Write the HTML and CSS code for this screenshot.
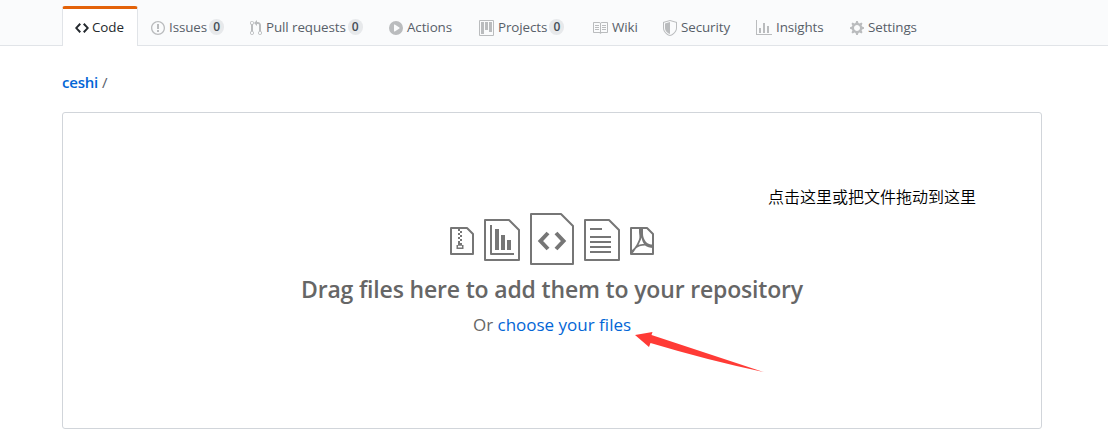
FILE: index.html
```html
<!DOCTYPE html>
<html lang="en">
<head>
<meta charset="utf-8">
<title>Upload files</title>
<link rel="stylesheet" href="styles.css">
</head>
<body>
<nav class="tabs">
  <a class="tab selected"><svg class="icon" width="14" height="16" viewBox="0 0 14 16"><path d="M9.5 3L8 4.5 11.5 8 8 11.5 9.5 13 14 8 9.5 3zm-5 0L0 8l4.5 5L6 11.5 2.5 8 6 4.5 4.5 3z"/></svg><span class="label">Code</span></a>
  <a class="tab"><svg class="icon" width="14" height="16" viewBox="0 0 14 16"><path d="M7 2.3c3.14 0 5.7 2.56 5.7 5.7s-2.56 5.7-5.7 5.7A5.71 5.71 0 011.3 8c0-3.14 2.56-5.7 5.7-5.7zM7 1C3.14 1 0 4.14 0 8s3.14 7 7 7 7-3.14 7-7-3.14-7-7-7zm1 3H6v5h2V4zm0 6H6v2h2v-2z"/></svg><span class="label">Issues</span><span class="counter">0</span></a>
  <a class="tab"><svg class="icon" width="12" height="16" viewBox="0 0 12 16"><path d="M11 11.28V5c-.03-.78-.34-1.47-.94-2.06C9.46 2.35 8.78 2.03 8 2H7V0L4 3l3 3V4h1c.27.02.48.11.69.31.21.2.3.42.31.69v6.28A1.993 1.993 0 0010 15a1.993 1.993 0 001-3.72zm-1 2.92c-.66 0-1.2-.55-1.2-1.2 0-.65.55-1.2 1.2-1.2.65 0 1.2.55 1.2 1.2 0 .65-.55 1.2-1.2 1.2zM4 3c0-1.11-.89-2-2-2a1.993 1.993 0 00-1 3.72v6.56A1.993 1.993 0 002 15a1.993 1.993 0 001-3.72V4.72c.59-.34 1-.98 1-1.72zm-.8 10c0 .66-.55 1.2-1.2 1.2-.65 0-1.2-.55-1.2-1.2 0-.65.55-1.2 1.2-1.2.65 0 1.2.55 1.2 1.2zM2 4.2C1.34 4.2.8 3.65.8 3c0-.65.55-1.2 1.2-1.2.65 0 1.2.55 1.2 1.2 0 .65-.55 1.2-1.2 1.2z"/></svg><span class="label">Pull requests</span><span class="counter">0</span></a>
  <a class="tab"><svg class="icon" width="14" height="16" viewBox="0 0 14 16"><path fill-rule="evenodd" d="M14 8A7 7 0 110 8a7 7 0 0114 0zm-8.223 3.482l4.599-3.066a.5.5 0 000-.832L5.777 4.518A.5.5 0 005 4.934v6.132a.5.5 0 00.777.416z"/></svg><span class="label">Actions</span></a>
  <a class="tab"><svg class="icon" width="15" height="16" viewBox="0 0 15 16"><path fill-rule="evenodd" d="M10 12h3V2h-3v10zm-4-2h3V2H6v8zm-4 4h3V2H2v12zm-1 1h13V1H1v14zM14 0H1a1 1 0 00-1 1v14a1 1 0 001 1h13a1 1 0 001-1V1a1 1 0 00-1-1z"/></svg><span class="label">Projects</span><span class="counter">0</span></a>
  <a class="tab"><svg class="icon" width="16" height="16" viewBox="0 0 16 16"><path fill-rule="evenodd" d="M3 5h4v1H3V5zm0 3h4V7H3v1zm0 2h4V9H3v1zm11-5h-4v1h4V5zm0 2h-4v1h4V7zm0 2h-4v1h4V9zm2-6v9c0 .55-.45 1-1 1H9.5l-1 1-1-1H2c-.55 0-1-.45-1-1V3c0-.55.45-1 1-1h5.5l1 1 1-1H15c.55 0 1 .45 1 1zm-8 .5L7.5 3H2v9h6V3.5zm7-.5H9.5l-.5.5V12h6V3z"/></svg><span class="label">Wiki</span></a>
  <a class="tab"><svg class="icon" width="14" height="16" viewBox="0 0 14 16"><path fill-rule="evenodd" d="M0 2l7-2 7 2v6.02C14 12.69 8.69 16 7 16c-1.69 0-7-3.31-7-7.98V2zm1 .75L7 1l6 1.75v5.268C13 12.104 8.449 15 7 15c-1.449 0-6-2.896-6-6.982V2.75zm1 .75L7 2v12c-1.207 0-5-2.482-5-5.985V3.5z"/></svg><span class="label">Security</span></a>
  <a class="tab"><svg class="icon" width="16" height="16" viewBox="0 0 16 16"><path d="M16 14v1H0V0h1v14h15zM5 13H3V8h2v5zm4 0H7V3h2v10zm4 0h-2V6h2v7z"/></svg><span class="label">Insights</span></a>
  <a class="tab"><svg class="icon" width="14" height="16" viewBox="0 0 14 16"><path fill-rule="evenodd" d="M14 8.77v-1.6l-1.94-.64-.45-1.09.88-1.84-1.13-1.13-1.81.91-1.09-.45-.69-1.92h-1.6l-.63 1.94-1.11.45-1.84-.88-1.13 1.13.91 1.81-.45 1.09L0 7.23v1.59l1.94.64.45 1.09-.88 1.84 1.13 1.13 1.81-.91 1.09.45.69 1.92h1.59l.63-1.94 1.11-.45 1.84.88 1.13-1.13-.92-1.81.47-1.09L14 8.75v.02zM7 11c-1.66 0-3-1.34-3-3s1.34-3 3-3 3 1.34 3 3-1.34 3-3 3z"/></svg><span class="label">Settings</span></a>
</nav>
<main class="content">
  <div class="breadcrumb"><a class="repo">ceshi</a> /</div>
  <section class="dropzone">
    <div class="files">
      <svg class="file small" width="24" height="28" viewBox="0 0 24 28"><path d="M1 1H17L23 7V27H1Z"/><path class="solid" d="M8 2h2v2H8zM10 4h2v2h-2zM8 6h2v2H8zM10 8h2v2h-2zM8 10h2v2H8zM10 12h2v2h-2zM8 14h2v2H8zM8 16h4v2h1.5v4h-7v-4H8zM8 18.7v1.8h4v-1.8z" fill-rule="evenodd"/></svg>
      <svg class="file medium" width="36" height="42" viewBox="0 0 36 42"><path d="M1 1H25L35 11V41H1Z"/><path d="M7 6V35H30"/><path class="solid" d="M11 10h4v21h-4zM17 16h4v15h-4zM23 21h4v10h-4z"/></svg>
      <svg class="file" width="44" height="52" viewBox="0 0 44 52"><path d="M1 1H31L43 13V51H1Z"/><path class="chevron" d="M18 20L10.5 28L18 36M26 20L33.5 28L26 36"/></svg>
      <svg class="file medium" width="36" height="42" viewBox="0 0 36 42"><path d="M1 1H25L35 11V41H1Z"/><path d="M6 10H18M6 18H27M6 23H27M6 28H27M6 33H27"/></svg>
      <svg class="file small" width="24" height="28" viewBox="0 0 24 28"><path d="M1 1H17L23 7V27H1Z"/><path class="solid" d="M9 2h4v5c0 3 1 5 3 8 2 2 4 2.500 7 2.500V21c-3 0-6-1-8-2.500-4 0-7 1-9 3-2 3-3 5-5 5v-3c3-1 6-6 8-11 1-3 0-5 0-7.500zM11.500 10.500c-.5 2.500-2 5-3 7.500 1.500-.7 3.500-1 5.500-1-1.300-2-2-4-2.500-6.500z" fill-rule="evenodd"/></svg>
    </div>
    <h2 class="title">Drag files here to add them to your repository</h2>
    <p class="choose"><span>Or </span><a class="link">choose your files</a></p>
    <div class="note" lang="zh">点击这里或把文件拖动到这里</div>
    <svg class="arrow" width="130" height="44" viewBox="0 0 130 44"><path d="M0 5L17.5 2L16.5 5L128.500 42Q72 30 15.500 13L14 17Z"/></svg>
  </section>
</main>
</body>
</html>
```
FILE: styles.css
```css
* { box-sizing: border-box; }
body {
  margin: 0;
  background: #fff;
  color: #586069;
  font-family: "Open Sans", "Noto Sans", sans-serif;
}
.tabs {
  display: grid;
  grid-template-columns: 75px 99px 139px 90px 113px 71px 93px 94px 96px;
  height: 46px;
  padding: 6px 0 0 62px;
  background: #fafbfc;
  border-bottom: 1px solid #e1e4e8;
}
.tab {
  display: flex;
  align-items: center;
  height: 40px;
  padding: 4px 0 0 14px;
  font-size: 13.4px;
  letter-spacing: -0.1px;
  white-space: nowrap;
}
.selected {
  width: 76px;
  padding: 0 0 0 12px;
  background: #fff;
  border: solid #e1e4e8;
  border-width: 3px 1px 0;
  border-top-color: #e36209;
  border-radius: 3px 3px 0 0;
  color: #24292e;
}
.icon { flex: none; fill: #babcbe; }
.selected .icon { fill: #24292e; }
.label { margin: -2px 0 0 4px; line-height: 20px; }
.selected .label { margin-left: 3px; }
.counter {
  width: 15px;
  height: 16px;
  margin: -2px 0 0 2px;
  border-radius: 8px;
  background: #e7e9eb;
  color: #444d56;
  font-size: 12px;
  font-weight: 600;
  line-height: 16px;
  text-align: center;
}
.content { padding: 25px 66px 0 62px; }
.breadcrumb { height: 41px; line-height: 22px; font-size: 15px; }
.repo { color: #0366d6; font-weight: 600; letter-spacing: -0.2px; }
.dropzone {
  position: relative;
  height: 317px;
  padding-top: 100px;
  border: 1px solid #d1d5da;
  border-radius: 3px;
  text-align: center;
  color: #666;
}
.files { display: flex; justify-content: center; align-items: center; gap: 10px; height: 52px; }
.file { fill: none; stroke: #767676; stroke-width: 2; stroke-linejoin: round; }
.file.small { margin-top: 4px; }
.file.medium { margin-top: 2px; }
.file .solid { fill: #767676; stroke: none; }
.file .chevron { stroke-width: 4; stroke-linejoin: miter; }
.title { margin: 8px 0 0; font-size: 23px; font-weight: 600; line-height: 32px; letter-spacing: -0.17px; white-space: nowrap; }
.choose { margin: 7px 0 0; font-size: 17px; line-height: 26px; }
.link { color: #0366d6; }
.note {
  position: absolute;
  left: 705px;
  top: 71px;
  color: #000;
  font: 350 16px/24px "Noto Sans CJK SC", sans-serif;
}
.arrow { position: absolute; left: 572px; top: 217px; fill: #ff3b36; }
```
